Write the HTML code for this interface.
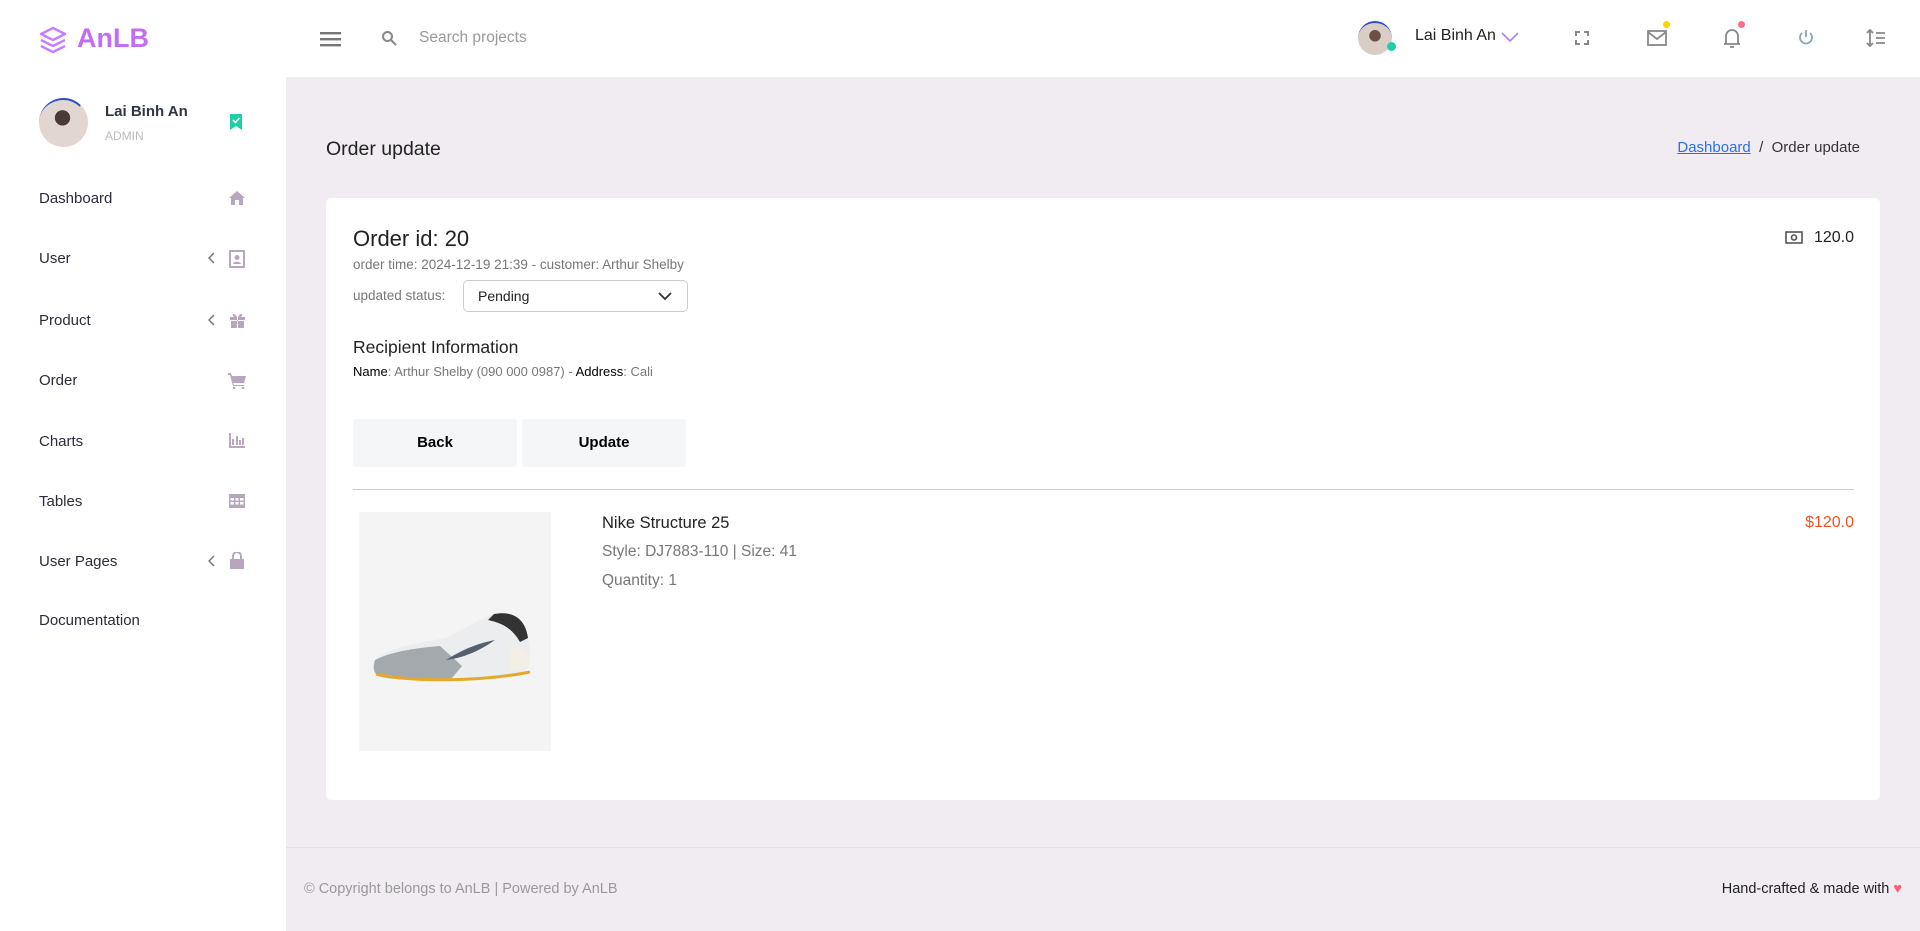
<!DOCTYPE html>
<html><head><meta charset="utf-8"><style>
*{box-sizing:border-box;margin:0;padding:0}
body{width:1920px;height:931px;overflow:hidden;font-family:"Liberation Sans",sans-serif;background:#f1ecf2;position:relative;color:#333}
.abs{position:absolute}
.header{left:0;top:0;width:1920px;height:77px;background:#fff}
.sidebar{left:0;top:77px;width:286px;height:854px;background:#fff}
.menu{position:absolute;left:39px;font-size:15px;color:#2b2b3b}
.ic{position:absolute;fill:#b7a7bd}
.card{left:326px;top:198px;width:1554px;height:602px;background:#fff;border-radius:5px}
.btn{position:absolute;top:419px;width:164px;height:48px;background:#f5f6f8;border-radius:3px;font-weight:bold;font-size:15px;color:#000;text-align:center;line-height:48px}
</style></head><body>
<div class="abs header"></div>
<div class="abs sidebar"></div>
<svg class="abs" style="left:39px;top:26px" width="28" height="30" viewBox="0 0 28 30" fill="none" stroke="#c77dff" stroke-width="2.4" stroke-linejoin="round"><path d="M14 2L26 8L14 14L2 8Z"/><path d="M2 14L14 20L26 14"/><path d="M2 20L14 26L26 20"/></svg>
<div class="abs" style="left:77px;top:23px;font-size:27px;font-weight:bold;color:#c16ef5">AnLB</div>
<svg class="abs" style="left:320px;top:31px" width="21" height="16"><rect y="1" width="21" height="2.4" fill="#777"/><rect y="7" width="21" height="2.4" fill="#777"/><rect y="13" width="21" height="2.4" fill="#777"/></svg>
<svg class="abs" style="left:381px;top:30px" width="16" height="16" fill="none" stroke="#888" stroke-width="2"><circle cx="6.5" cy="6.5" r="4.5"/><path d="M10 10L15 15"/></svg>
<div class="abs" style="left:419px;top:29px;font-size:15.5px;color:#999">Search projects</div>
<div class="abs" style="left:1358px;top:21px;width:34px;height:34px;border-radius:50%;background:radial-gradient(circle at 50% 40%,#6b5145 0 22%,#d9cdc6 23% 100%);border-top:2px solid #2a4fd0"></div>
<div class="abs" style="left:1387px;top:42px;width:9px;height:9px;border-radius:50%;background:#1ecfa5"></div>
<div class="abs" style="left:1415px;top:27px;font-size:16px;color:#222">Lai Binh An</div>
<svg class="abs" style="left:1501px;top:32px" width="18" height="11" fill="none" stroke="#b57bf5" stroke-width="1.6"><path d="M1 1L9 9L17 1"/></svg>
<svg class="abs" style="left:1575px;top:31px" width="14" height="14" fill="none" stroke="#888" stroke-width="2"><path d="M1 5V1H5M9 1H13V5M13 9V13H9M5 13H1V9"/></svg>
<svg class="abs" style="left:1647px;top:30px" width="20" height="16" fill="none" stroke="#888" stroke-width="1.8"><rect x="1" y="1" width="18" height="14"/><path d="M1 2L10 9L19 2"/></svg>
<div class="abs" style="left:1663px;top:21px;width:7px;height:7px;border-radius:50%;background:#ffd400"></div>
<svg class="abs" style="left:1723px;top:27px" width="18" height="22" fill="none" stroke="#888" stroke-width="1.8"><path d="M3 17V9A6 6 0 0 1 15 9V17H17H1Z"/><path d="M7 20H11"/></svg>
<div class="abs" style="left:1738px;top:21px;width:7px;height:7px;border-radius:50%;background:#ff6b8b"></div>
<svg class="abs" style="left:1798px;top:29px" width="16" height="17" fill="none" stroke="#8aa" stroke-width="1.8"><path d="M8 1V8"/><path d="M4 4A6 6 0 1 0 12 4"/></svg>
<svg class="abs" style="left:1866px;top:29px" width="20" height="18" fill="none" stroke="#888" stroke-width="1.8"><path d="M4 1V17M1 4L4 1L7 4M1 14L4 17L7 14M10 4H19M10 9H19M10 14H19"/></svg>
<div class="abs" style="left:39px;top:98px;width:49px;height:49px;border-radius:50%;background:radial-gradient(circle at 50% 38%,#4a3a33 0 20%,#e2d7d0 21% 100%);border-top:2px solid #2a4fd0;border-right:2px solid transparent"></div>
<div class="abs" style="left:105px;top:103px;font-size:15px;font-weight:bold;color:#2f3542">Lai Binh An</div>
<div class="abs" style="left:105px;top:129px;font-size:12px;color:#bbb">ADMIN</div>
<svg class="abs" style="left:230px;top:114px" width="12" height="16"><path d="M0 0H12V16L6 12L0 16Z" fill="#1ecfa5"/><path d="M3 6L5.5 8.5L9.5 4" stroke="#fff" stroke-width="1.6" fill="none"/></svg>
<div class="menu" style="top:190px">Dashboard</div>
<div class="menu" style="top:250px">User</div>
<div class="menu" style="top:312px">Product</div>
<div class="menu" style="top:372px">Order</div>
<div class="menu" style="top:433px">Charts</div>
<div class="menu" style="top:493px">Tables</div>
<div class="menu" style="top:553px">User Pages</div>
<div class="menu" style="top:612px">Documentation</div>
<svg class="ic" style="left:229px;top:191px" width="16" height="14"><path d="M8 0L16 7H14V14H10V9H6V14H2V7H0Z"/></svg>
<svg class="abs" style="left:208px;top:252px" width="8" height="12" fill="none" stroke="#777" stroke-width="1.5"><path d="M6 1L1 6L6 11"/></svg>
<svg class="ic" style="left:229px;top:250px" width="16" height="18"><path d="M0 0H16V18H0ZM2 2V16H14V2Z M8 5A2.5 2.5 0 1 1 8 10A2.5 2.5 0 1 1 8 5ZM4 14C4 11 12 11 12 14Z"/></svg>
<svg class="abs" style="left:208px;top:314px" width="8" height="12" fill="none" stroke="#777" stroke-width="1.5"><path d="M6 1L1 6L6 11"/></svg>
<svg class="ic" style="left:229px;top:312px" width="17" height="16"><path d="M1 5H16V8H1ZM2 9H15V16H2Z M8 5V16H9V5Z M8 5C5 0 2 2 5 5M9 5C12 0 15 2 12 5" /></svg>
<svg class="ic" style="left:228px;top:373px" width="18" height="16"><path d="M0 0H3L4 3H18L16 10H5L6 12H16V13H5L2 2H0Z"/><circle cx="6" cy="15" r="1.3"/><circle cx="15" cy="15" r="1.3"/></svg>
<svg class="ic" style="left:229px;top:433px" width="16" height="15"><path d="M0 0H2V13H16V15H0Z M3 6H5V12H3ZM7 3H9V12H7ZM10 7H12V12H10ZM13 5H15V12H13Z"/></svg>
<svg class="ic" style="left:229px;top:494px" width="16" height="14"><path d="M0 0H16V14H0ZM1.5 4V6.5H5V4ZM6.5 4V6.5H9.5V4ZM11 4V6.5H14.5V4ZM1.5 8V10.5H5V8ZM6.5 8V10.5H9.5V8ZM11 8V10.5H14.5V8Z" fill-rule="evenodd"/></svg>
<svg class="abs" style="left:208px;top:555px" width="8" height="12" fill="none" stroke="#777" stroke-width="1.5"><path d="M6 1L1 6L6 11"/></svg>
<svg class="ic" style="left:230px;top:552px" width="14" height="17"><path d="M0 7H14V17H0Z"/><path d="M3 7V4A4 4 0 0 1 11 4V7" fill="none" stroke="#b7a7bd" stroke-width="2"/></svg>
<div class="abs" style="left:326px;top:138px;font-size:19.5px;color:#222">Order update</div>
<div class="abs" style="right:60px;top:139px;font-size:15px;color:#333"><span style="color:#2b6fe8;text-decoration:underline">Dashboard</span>&nbsp;&nbsp;/&nbsp;&nbsp;Order update</div>
<div class="abs card"></div>
<div class="abs" style="left:353px;top:226px;font-size:22px;color:#222">Order id: 20</div>
<svg class="abs" style="left:1785px;top:231px" width="18" height="13" fill="none" stroke="#555" stroke-width="1.6"><rect x="1" y="1" width="16" height="11"/><circle cx="9" cy="6.5" r="2.5"/></svg>
<div class="abs" style="right:66px;top:229px;font-size:16px;color:#222">120.0</div>
<div class="abs" style="left:353px;top:257px;font-size:13.5px;color:#777">order time: 2024-12-19 21:39 - customer: Arthur Shelby</div>
<div class="abs" style="left:353px;top:288px;font-size:13.5px;color:#777">updated status:</div>
<div class="abs" style="left:463px;top:280px;width:225px;height:32px;border:1px solid #ccc;border-radius:5px;font-size:14px;color:#222;padding:7px 0 0 14px">Pending</div>
<svg class="abs" style="left:658px;top:292px" width="14" height="9" fill="none" stroke="#333" stroke-width="1.8"><path d="M1 1L7 7L13 1"/></svg>
<div class="abs" style="left:353px;top:337px;font-size:17.5px;color:#222">Recipient Information</div>
<div class="abs" style="left:353px;top:364px;font-size:13px;color:#777"><span style="color:#000">Name</span>: Arthur Shelby (090 000 0987) - <span style="color:#000">Address</span>: Cali</div>
<div class="btn" style="left:353px">Back</div>
<div class="btn" style="left:522px">Update</div>
<div class="abs" style="left:353px;top:489px;width:1501px;height:1px;background:#ccc"></div>
<div class="abs" style="left:359px;top:512px;width:192px;height:239px;background:#f4f4f4"></div>
<svg class="abs" style="left:370px;top:610px" width="170" height="75" viewBox="0 0 170 75">
<path d="M5 50C15 38 45 34 75 28C92 20 112 8 124 4C140 1 155 6 158 28C162 44 162 58 150 64C120 70 60 72 10 67C2 65 2 56 5 50Z" fill="#ecedef"/>
<path d="M5 50C20 42 45 38 70 36L92 56L82 68C50 71 20 70 8 66C3 62 3 56 5 50Z" fill="#a4a9ae"/>
<path d="M124 4C140 1 155 6 158 28L150 32C142 18 132 13 118 10Z" fill="#333"/>
<path d="M125 30C108 42 92 48 76 50C92 40 105 34 125 30Z" fill="#55606c"/>
<path d="M140 38C150 36 158 40 160 50C158 58 150 62 140 60Z" fill="#f3efe4"/>
<path d="M6 64C40 72 110 72 160 62" stroke="#e3a92a" stroke-width="3" fill="none"/>
</svg>
<div class="abs" style="left:602px;top:514px;font-size:16.5px;color:#222">Nike Structure 25</div>
<div class="abs" style="left:602px;top:543px;font-size:15.5px;color:#777">Style: DJ7883-110 | Size: 41</div>
<div class="abs" style="left:602px;top:572px;font-size:15.5px;color:#777">Quantity: 1</div>
<div class="abs" style="right:66px;top:514px;font-size:16px;color:#f4511e">$120.0</div>
<div class="abs" style="left:286px;top:847px;width:1634px;height:1px;background:#e4dde6"></div>
<div class="abs" style="left:304px;top:881px;font-size:14.5px;color:#999">© Copyright belongs to AnLB | Powered by AnLB</div>
<div class="abs" style="right:18px;top:881px;font-size:14.5px;color:#222">Hand-crafted &amp; made with <span style="color:#ff5a7a">♥</span></div>
</body></html>
